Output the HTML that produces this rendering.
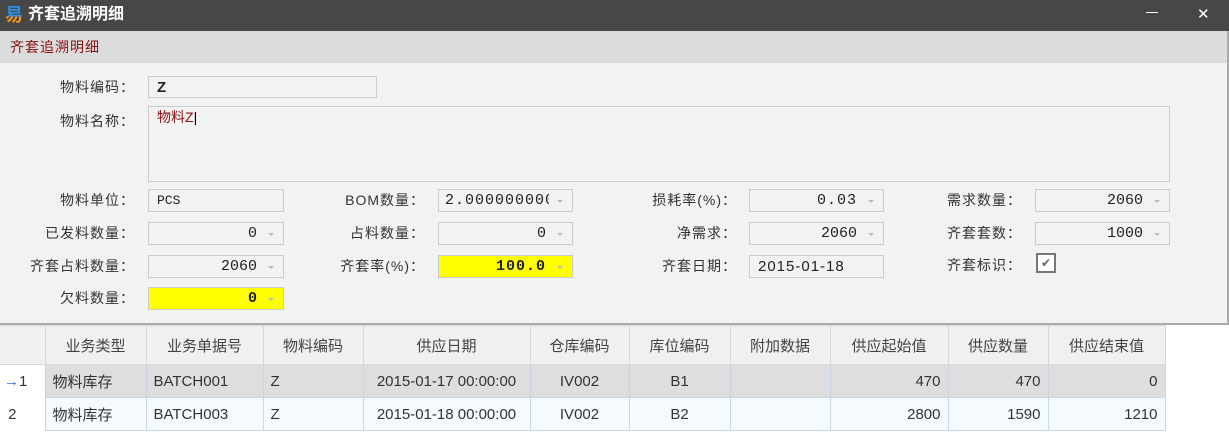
<!DOCTYPE html>
<html><head><meta charset="utf-8"><style>
*{margin:0;padding:0;box-sizing:border-box}
body{width:1229px;height:441px;overflow:hidden;background:#fff;font-family:"Liberation Sans","Noto Sans CJK SC",sans-serif;position:relative}
.a{position:absolute}
.title{left:0;top:0;width:1229px;height:31px;background:#474747;color:#fff;font-size:16px;font-weight:bold;line-height:30px}
.sec{left:0;top:31px;width:1227px;height:32px;background:#dcdcdc;color:#8b1010;font-size:14px;line-height:32px;padding-left:10px;letter-spacing:1px}
.form{left:0;top:63px;width:1227px;height:260px;background:#f2f2f2}
.rb{left:1227px;top:31px;width:2px;height:294px;background:#aaa}
.lbl{font-size:14px;color:#333;text-align:right;width:200px;line-height:22px;letter-spacing:1px}
.in{background:#f2f2f2;border:1px solid #ccc;height:23px;font-size:15px;color:#222;line-height:21px;padding:0 8px;font-family:"Liberation Mono","Noto Sans CJK SC",monospace;white-space:nowrap}
.num{text-align:right;padding-right:26px}
.num::after{content:"";position:absolute;right:9px;top:10px;border:3px solid transparent;border-top:3px solid #bbb}
.y{background:#ffff00;font-weight:bold}
.sep{left:0;top:323px;width:1229px;height:2px;background:#aaa}
table{position:absolute;left:0;top:325px;border-collapse:collapse;font-size:15px;color:#333}
td,th{height:33px;border:1px solid #c9d6e6;padding:0 7px;font-weight:normal;white-space:nowrap}
th{height:39px;background:#f0f0f0;border-color:#d8d8d8;color:#444}
tr.r1 td{background:#dedede}
tr.r2 td{background:#f5faff}
td.ix{background:#fff!important;border:none;padding-left:4px}
th.ix{border-left:none}
.r{text-align:right}.c{text-align:center}
</style></head><body>
<div class="a title"><span style="position:absolute;left:5px;top:0;font-size:18px;background:linear-gradient(#2e8fe6 55%,#f7941d 55%);-webkit-background-clip:text;background-clip:text;color:transparent">易</span><span style="position:absolute;left:28px">齐套追溯明细</span>
<span style="position:absolute;left:1146px;top:12px;width:12px;height:1px;background:#fff"></span><span style="position:absolute;left:1197px;top:0;font-size:15px;font-weight:normal">✕</span></div>
<div class="a sec">齐套追溯明细</div>
<div class="a form"></div>
<div class="a rb"></div>

<div class="a lbl" style="left:-65px;top:76px">物料编码：</div>
<div class="a in" style="left:148px;top:76px;width:229px;height:22px;font-family:'Liberation Sans',sans-serif;font-weight:bold">Z</div>
<div class="a lbl" style="left:-65px;top:110px">物料名称：</div>
<div class="a in" style="left:148px;top:106px;width:1022px;height:76px;color:#8b1010;font-family:'Liberation Sans','Noto Sans CJK SC',sans-serif;font-size:14px">物料Z<span style="color:#000">|</span></div>

<div class="a lbl" style="left:-65px;top:189px">物料单位：</div>
<div class="a in" style="left:148px;top:189px;width:136px;font-size:13px">PCS</div>
<div class="a lbl" style="left:-65px;top:222px">已发料数量：</div>
<div class="a in num" style="left:148px;top:222px;width:136px">0</div>
<div class="a lbl" style="left:-65px;top:255px">齐套占料数量：</div>
<div class="a in num" style="left:148px;top:255px;width:136px">2060</div>
<div class="a lbl" style="left:-65px;top:287px">欠料数量：</div>
<div class="a in num y" style="left:148px;top:287px;width:136px">0</div>

<div class="a lbl" style="left:225px;top:189px">BOM数量：</div>
<div class="a in num" style="left:438px;top:189px;width:135px;padding:0"><div style="width:110px;overflow:hidden;text-align:left;padding-left:6px;letter-spacing:1px">2.0000000000</div></div>
<div class="a lbl" style="left:225px;top:222px">占料数量：</div>
<div class="a in num" style="left:438px;top:222px;width:135px">0</div>
<div class="a lbl" style="left:225px;top:255px">齐套率(%)：</div>
<div class="a in num y" style="left:438px;top:255px;width:135px;letter-spacing:1px">100.0</div>

<div class="a lbl" style="left:537px;top:189px">损耗率(%)：</div>
<div class="a in num" style="left:749px;top:189px;width:135px;letter-spacing:1px">0.03</div>
<div class="a lbl" style="left:537px;top:222px">净需求：</div>
<div class="a in num" style="left:749px;top:222px;width:135px">2060</div>
<div class="a lbl" style="left:537px;top:255px">齐套日期：</div>
<div class="a in" style="left:749px;top:255px;width:135px;font-family:'Liberation Sans',sans-serif;letter-spacing:1px">2015-01-18</div>

<div class="a lbl" style="left:822px;top:189px">需求数量：</div>
<div class="a in num" style="left:1035px;top:189px;width:135px">2060</div>
<div class="a lbl" style="left:822px;top:222px">齐套套数：</div>
<div class="a in num" style="left:1035px;top:222px;width:135px">1000</div>
<div class="a lbl" style="left:822px;top:254px">齐套标识：</div>
<div class="a" style="left:1036px;top:253px;width:20px;height:20px;border:2px solid #777;background:#fff;color:#666;font-size:12px;line-height:16px;text-align:center">✔</div>

<div class="a sep"></div>
<table>
<tr><th class="ix" style="width:45px"></th><th style="width:101px">业务类型</th><th style="width:117px">业务单据号</th><th style="width:100px">物料编码</th><th style="width:167px">供应日期</th><th style="width:99px">仓库编码</th><th style="width:101px">库位编码</th><th style="width:100px">附加数据</th><th style="width:118px">供应起始值</th><th style="width:100px">供应数量</th><th style="width:117px">供应结束值</th></tr>
<tr class="r1"><td class="ix"><span style="color:#2e6fd0">→</span>1</td><td>物料库存</td><td>BATCH001</td><td>Z</td><td class="c">2015-01-17 00:00:00</td><td class="c">IV002</td><td class="c">B1</td><td></td><td class="r">470</td><td class="r">470</td><td class="r">0</td></tr>
<tr class="r2"><td class="ix">&nbsp;2</td><td>物料库存</td><td>BATCH003</td><td>Z</td><td class="c">2015-01-18 00:00:00</td><td class="c">IV002</td><td class="c">B2</td><td></td><td class="r">2800</td><td class="r">1590</td><td class="r">1210</td></tr>
</table>
</body></html>
